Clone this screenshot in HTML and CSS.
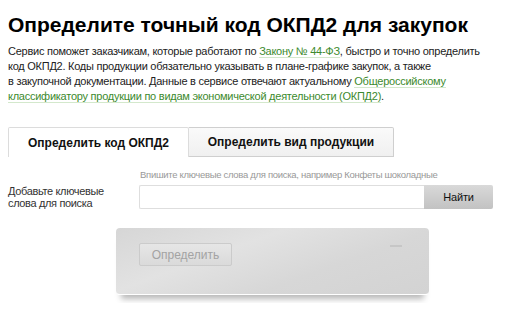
FILE: index.html
```html
<!DOCTYPE html>
<html lang="ru">
<head>
<meta charset="utf-8">
<title>ОКПД2</title>
<link rel="stylesheet" href="styles.css">
</head>
<body>
<h1 class="title">Определите точный код ОКПД2 для закупок</h1>
<p class="intro">Сервис поможет заказчикам, которые работают по <a class="link" href="#">Закону № 44-ФЗ</a>, быстро и точно определить<br>код ОКПД2. Коды продукции обязательно указывать в плане-графике закупок, а также<br>в закупочной документации. Данные в сервисе отвечают актуальному <a class="link" href="#">Общероссийскому<br>классификатору продукции по видам экономической деятельности (ОКПД2)</a>.</p>
<div class="tabs">
  <div class="tab tab-active">Определить код ОКПД2</div>
  <div class="tab tab-idle">Определить вид продукции</div>
</div>
<div class="search-row">
  <div class="search-label">Добавьте ключевые<br>слова для поиска</div>
  <div class="search-col">
    <div class="hint">Впишите ключевые слова для поиска, например Конфеты шоколадные</div>
    <div class="search-group">
      <div class="search-input"></div>
      <div class="search-btn">Найти</div>
    </div>
  </div>
</div>
<div class="result-box">
  <div class="result-btn">Определить</div>
  <div class="result-dash"></div>
</div>
</body>
</html>
```
FILE: styles.css
```css
html, body {
  margin: 0;
  padding: 0;
  background: #fff;
}
body {
  padding: 8px;
  font-family: "Liberation Sans", Arial, sans-serif;
  color: #222;
}
.title {
  margin: 4px 0 0;
  font-size: 21px;
  line-height: 26px;
  font-weight: bold;
  color: #000;
}
.intro {
  margin: 6px 0 0;
  font-size: 11px;
  line-height: 15px;
  letter-spacing: -0.25px;
  color: #222;
}
.link {
  color: #3c8a2e;
  text-decoration: none;
  border-bottom: 1px solid #d3e8cc;
}
.tabs {
  display: flex;
  margin-top: 23px;
}
.tab {
  height: 30px;
  display: flex;
  align-items: center;
  justify-content: center;
  font-size: 12px;
  font-weight: bold;
  color: #111;
  box-sizing: border-box;
}
.tab-active {
  width: 181px;
  background: #fff;
  border: 1px solid #dcdcdc;
  border-bottom: none;
  border-radius: 2px 2px 0 0;
}
.tab-idle {
  width: 205px;
  background: linear-gradient(#fafafa, #f0f0f0);
  border: 1px solid #cfcfcf;
  border-left: none;
  border-radius: 0 2px 0 0;
}
.search-row {
  display: flex;
  margin-top: 12px;
}
.search-label {
  width: 131px;
  padding-top: 16px;
  font-size: 11px;
  line-height: 12px;
  letter-spacing: -0.35px;
  color: #333;
}
.search-col {
  display: flex;
  flex-direction: column;
}
.hint {
  font-size: 9.5px;
  line-height: 12px;
  letter-spacing: -0.3px;
  color: #999;
  padding-left: 1px;
}
.search-group {
  display: flex;
  margin-top: 4px;
  height: 24px;
}
.search-input {
  width: 285px;
  box-sizing: border-box;
  border: 1px solid #dedede;
  border-right: none;
  border-radius: 2px 0 0 2px;
  background: #fff;
}
.search-btn {
  width: 69px;
  display: flex;
  align-items: center;
  justify-content: center;
  font-size: 11px;
  letter-spacing: -0.2px;
  color: #111;
  background: linear-gradient(#d9d9d9, #c2c2c2);
  border-radius: 0 2px 2px 0;
}
.result-box {
  position: relative;
  margin: 19px 0 0 108px;
  width: 313px;
  height: 67px;
  box-sizing: border-box;
  border-radius: 4px;
  background: linear-gradient(160deg, #d6d6d6 0%, #e2e2e2 35%, #d7d7d7 65%, #d3d3d3 100%);
  border-bottom: 1px solid #fff;
  box-shadow: 0 9px 6px -5px rgba(0,0,0,0.28);
  padding: 15px 0 0 23px;
}
.result-btn {
  width: 93px;
  height: 23px;
  box-sizing: border-box;
  border: 1px solid #cbcbcb;
  border-radius: 2px;
  background: linear-gradient(#e6e6e6, #dadada);
  color: #a3a3a3;
  font-size: 12px;
  display: flex;
  align-items: center;
  justify-content: center;
}
.result-dash {
  position: absolute;
  left: 274px;
  top: 17px;
  width: 12px;
  height: 2px;
  background: #c6c6c6;
}
```
